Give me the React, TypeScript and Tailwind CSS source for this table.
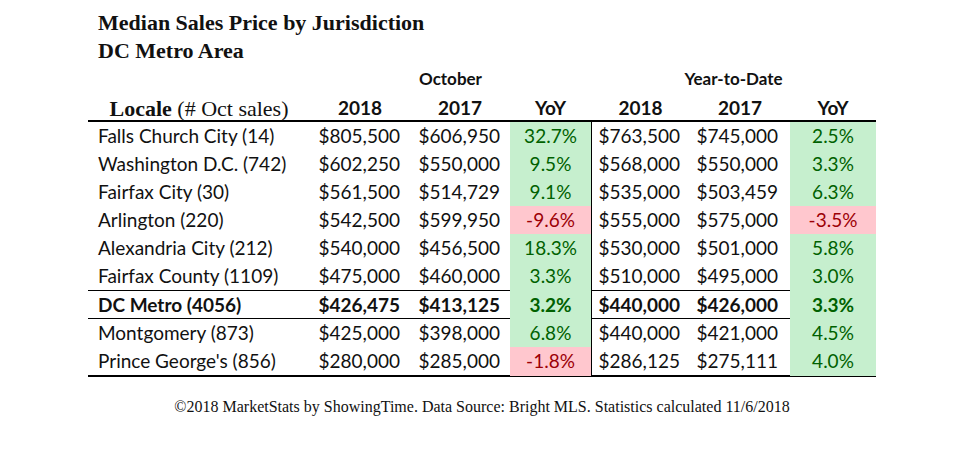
const rows = [
  { name: 'Falls Church City (14)', a: '$805,500', b: '$606,950', c: '32.7%', d: '$763,500', e: '$745,000', f: '2.5%' },
  { name: 'Washington D.C. (742)', a: '$602,250', b: '$550,000', c: '9.5%', d: '$568,000', e: '$550,000', f: '3.3%' },
  { name: 'Fairfax City (30)', a: '$561,500', b: '$514,729', c: '9.1%', d: '$535,000', e: '$503,459', f: '6.3%' },
  { name: 'Arlington (220)', a: '$542,500', b: '$599,950', c: '-9.6%', d: '$555,000', e: '$575,000', f: '-3.5%' },
  { name: 'Alexandria City (212)', a: '$540,000', b: '$456,500', c: '18.3%', d: '$530,000', e: '$501,000', f: '5.8%' },
  { name: 'Fairfax County (1109)', a: '$475,000', b: '$460,000', c: '3.3%', d: '$510,000', e: '$495,000', f: '3.0%' },
  { name: 'DC Metro (4056)', a: '$426,475', b: '$413,125', c: '3.2%', d: '$440,000', e: '$426,000', f: '3.3%', total: true },
  { name: 'Montgomery (873)', a: '$425,000', b: '$398,000', c: '6.8%', d: '$440,000', e: '$421,000', f: '4.5%' },
  { name: "Prince George's (856)", a: '$280,000', b: '$285,000', c: '-1.8%', d: '$286,125', e: '$275,111', f: '4.0%' },
];

const cols = 'grid grid-cols-[222px_100px_100px_81px_99px_100px_86px]';

function Yoy({ v }: { v: string }) {
  const neg = v.startsWith('-');
  return (
    <div
      className={
        'flex items-center justify-center ' +
        (neg ? 'bg-[#ffc7ce] text-[#9c0006]' : 'bg-[#c6efce] text-[#006100]')
      }
    >
      {v}
    </div>
  );
}

export default function App() {
  const serif = { fontFamily: '"Liberation Serif", "Times New Roman", serif' };
  const sans = { fontFamily: 'Lato, "Open Sans", sans-serif' };

  return (
    <div className="w-[970px] h-[453px] bg-white text-[#111] pt-[9px] pl-[88px]">
      <div className="pl-[10px] text-[22px] font-bold leading-[28px]" style={serif}>
        <div>Median Sales Price by Jurisdiction</div>
        <div>DC Metro Area</div>
      </div>

      <div className="w-[788px]" style={sans}>
        <div className={cols + ' h-[27px] items-center text-[17px] font-bold'}>
          <div />
          <div className="col-span-3 text-center">October</div>
          <div className="col-span-3 text-center">Year-to-Date</div>
        </div>
        <div className={cols + ' h-[28px] items-center text-[19px] font-bold'}>
          <div className="text-center text-[22px]" style={serif}>
            Locale <span className="font-normal">(# Oct sales)</span>
          </div>
          <div className="text-center">2018</div>
          <div className="text-center">2017</div>
          <div className="text-center">YoY</div>
          <div className="text-center">2018</div>
          <div className="text-center">2017</div>
          <div className="text-center">YoY</div>
        </div>

        <div className="border-t-2 border-b-2 border-black text-[19px]">
          {rows.map((r) => (
            <div
              key={r.name}
              className={cols + (r.total ? ' h-[29px] font-bold border-t border-b border-black' : ' h-[28px]')}
            >
              <div className="flex items-center pl-[10px]">{r.name}</div>
              <div className="flex items-center justify-end pr-[10px]">{r.a}</div>
              <div className="flex items-center justify-end pr-[10px]">{r.b}</div>
              <Yoy v={r.c} />
              <div className="flex items-center justify-end pr-[10px] border-l border-black">{r.d}</div>
              <div className="flex items-center justify-end pr-[12px]">{r.e}</div>
              <Yoy v={r.f} />
            </div>
          ))}
        </div>
      </div>

      <div className="mt-[20px] w-[788px] text-center text-[16px] leading-[20px]" style={serif}>
        ©2018 MarketStats by ShowingTime. Data Source: Bright MLS. Statistics calculated 11/6/2018
      </div>
    </div>
  );
}
